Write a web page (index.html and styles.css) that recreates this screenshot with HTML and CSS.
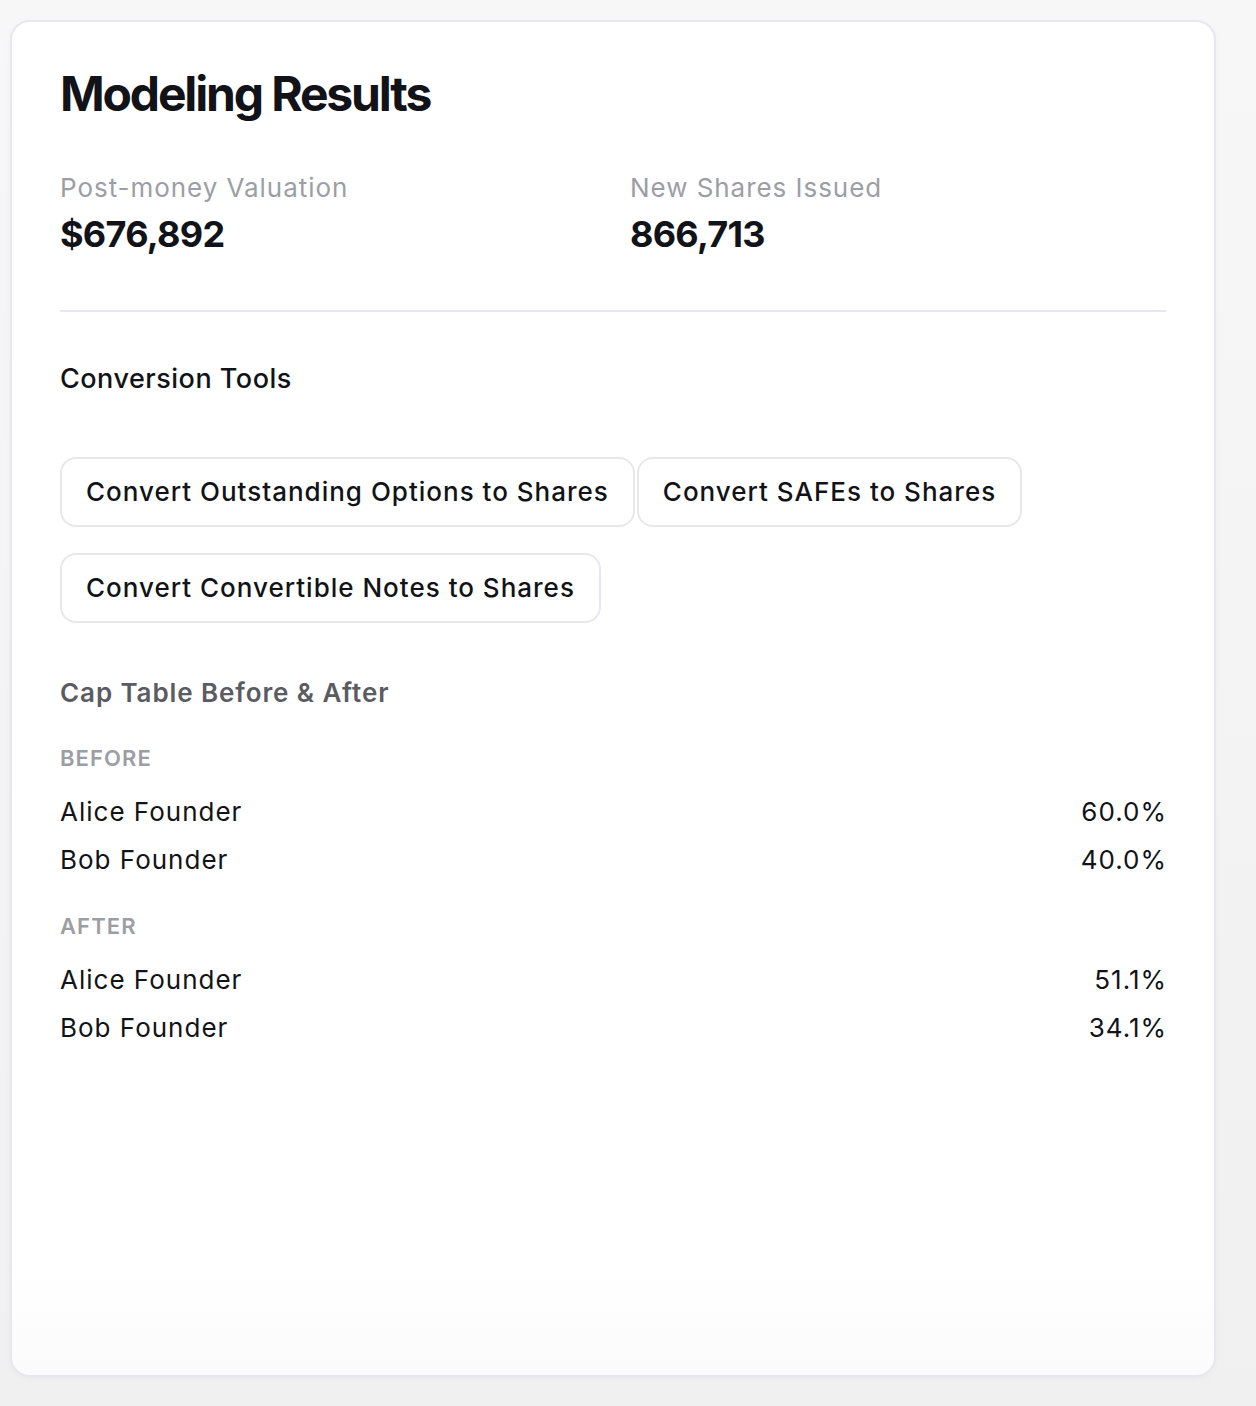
FILE: index.html
```html
<!DOCTYPE html>
<html lang="en">
<head>
<meta charset="utf-8">
<title>Modeling Results</title>
<link rel="stylesheet" href="styles.css">
</head>
<body>
<main class="card">
  <h1 class="title">Modeling Results</h1>
  <div class="stats">
    <div class="stat">
      <div class="stat-label">Post-money Valuation</div>
      <div class="stat-value">$676,892</div>
    </div>
    <div class="stat">
      <div class="stat-label">New Shares Issued</div>
      <div class="stat-value">866,713</div>
    </div>
  </div>
  <hr class="divider">
  <h2 class="section-title">Conversion Tools</h2>
  <div class="tools">
    <button class="tool-btn">Convert Outstanding Options to Shares</button>
    <button class="tool-btn">Convert SAFEs to Shares</button>
    <button class="tool-btn">Convert Convertible Notes to Shares</button>
  </div>
  <h3 class="cap-title">Cap Table Before &amp; After</h3>
  <section class="cap-group">
    <div class="group-label">BEFORE</div>
    <div class="row"><span>Alice Founder</span><span>60.0%</span></div>
    <div class="row"><span>Bob Founder</span><span>40.0%</span></div>
  </section>
  <section class="cap-group after">
    <div class="group-label">AFTER</div>
    <div class="row"><span>Alice Founder</span><span>51.1%</span></div>
    <div class="row"><span>Bob Founder</span><span>34.1%</span></div>
  </section>
</main>
</body>
</html>
```
FILE: styles.css
```css
* { box-sizing: border-box; }
html, body { margin: 0; padding: 0; }
body {
  background: linear-gradient(#f7f7f8, #f0f0f0);
  min-height: 1406px;
  font-family: Inter, "Noto Sans", sans-serif;
  color: #111318;
  padding: 20px 40px 30px 10px;
}
.card {
  height: 1357px;
  background: linear-gradient(#ffffff 92%, #fbfbfc);
  border: 2px solid #e6e8ee;
  border-radius: 20px;
  padding: 43px 48px 48px 48px;
  box-shadow: 0 2px 6px rgba(0,0,0,0.03);
}
.title {
  margin: 0;
  font-size: 48px;
  line-height: 1.2;
  font-weight: 700;
  letter-spacing: -0.045em;
  color: #111318;
}
.stats {
  display: grid;
  grid-template-columns: 1fr 1fr;
  column-gap: 34px;
  margin-top: 45px;
}
.stat-label {
  font-size: 26px;
  line-height: 1.5;
  color: #9c9ea6;
  letter-spacing: 0.95px;
}
.stat-value {
  margin-top: 4px;
  font-size: 36px;
  line-height: 1.3;
  font-weight: 700;
  letter-spacing: -0.02em;
}
.divider {
  margin: 53px 0 0 0;
  border: 0;
  height: 2px;
  background: #e6e8ee;
}
.section-title {
  margin: 47px 0 0 0;
  font-size: 27px;
  line-height: 1.5;
  font-weight: 500;
  letter-spacing: 0.5px;
  color: #111318;
}
.tools {
  display: flex;
  flex-wrap: wrap;
  column-gap: 2px;
  row-gap: 26px;
  margin-top: 57px;
}
.tool-btn {
  font-family: inherit;
  font-size: 26px;
  line-height: 1.5;
  font-weight: 500;
  letter-spacing: 1px;
  color: #111318;
  background: #fff;
  border: 2px solid #e6e8ee;
  border-radius: 16px;
  padding: 13.5px 24px;
  cursor: pointer;
}
.cap-title {
  margin: 50px 0 0 0;
  font-size: 26px;
  line-height: 1.5;
  font-weight: 600;
  letter-spacing: 0.9px;
  color: #5a5b63;
}
.cap-group { margin-top: 30px; }
.cap-group.after { margin-top: 26px; }
.group-label {
  font-size: 22px;
  line-height: 1.5;
  font-weight: 600;
  letter-spacing: 1.1px;
  color: #9c9ea6;
  margin-bottom: 13px;
}
.row {
  display: flex;
  justify-content: space-between;
  font-size: 26px;
  line-height: 48px;
  letter-spacing: 1px;
  color: #111318;
}
.row span:last-child { margin-right: -1px; }
```
